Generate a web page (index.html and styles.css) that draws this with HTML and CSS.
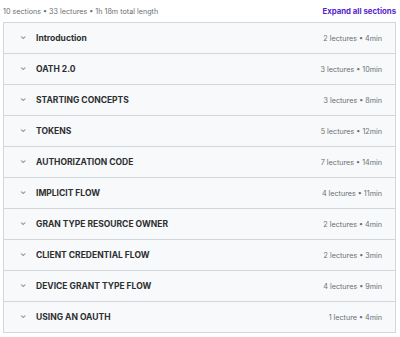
FILE: index.html
```html
<!DOCTYPE html>
<html lang="en">
<head>
  <meta charset="UTF-8" />
  <meta name="viewport" content="width=device-width, initial-scale=1.0"/>
  <title>Course content</title>
  <link rel="stylesheet" href="styles.css">
</head>
<body>
  <div class="content-head">
    <span class="summary">10 sections • 33 lectures • 1h 18m total length</span>
    <button class="expand">Expand all sections</button>
  </div>
  <div class="sections">
    <div class="section"><span class="chev">&#8964;</span><span class="title">Introduction</span><span class="meta">2 lectures • 4min</span></div>
    <div class="section"><span class="chev">&#8964;</span><span class="title">OATH 2.0</span><span class="meta">3 lectures • 10min</span></div>
    <div class="section"><span class="chev">&#8964;</span><span class="title">STARTING CONCEPTS</span><span class="meta">3 lectures • 8min</span></div>
    <div class="section"><span class="chev">&#8964;</span><span class="title">TOKENS</span><span class="meta">5 lectures • 12min</span></div>
    <div class="section"><span class="chev">&#8964;</span><span class="title">AUTHORIZATION CODE</span><span class="meta">7 lectures • 14min</span></div>
    <div class="section"><span class="chev">&#8964;</span><span class="title">IMPLICIT FLOW</span><span class="meta">4 lectures • 11min</span></div>
    <div class="section"><span class="chev">&#8964;</span><span class="title">GRAN TYPE RESOURCE OWNER</span><span class="meta">2 lectures • 4min</span></div>
    <div class="section"><span class="chev">&#8964;</span><span class="title">CLIENT CREDENTIAL FLOW</span><span class="meta">2 lectures • 3min</span></div>
    <div class="section"><span class="chev">&#8964;</span><span class="title">DEVICE GRANT TYPE FLOW</span><span class="meta">4 lectures • 9min</span></div>
    <div class="section"><span class="chev">&#8964;</span><span class="title">USING AN OAUTH</span><span class="meta">1 lecture • 4min</span></div>
  </div>
</body>
</html>
```

FILE: styles.css
```css
body {
  margin: 0;
  padding: 0 4px 0 3px;
  font-family: Inter, 'Liberation Sans', Arial, sans-serif;
  color: #2d2f31;
  background: #fff;
}
.content-head {
  display: flex;
  justify-content: space-between;
  align-items: center;
  height: 22px;
}
.summary {
  font-size: 7.2px;
  color: #6a6f73;
}
.expand {
  border: none;
  background: none;
  padding: 0;
  font-family: inherit;
  font-size: 7.8px;
  font-weight: 700;
  color: #5624d0;
  cursor: pointer;
}
.sections {
  border: 1px solid #d1d7dc;
}
.section {
  display: flex;
  align-items: center;
  height: 30px;
  padding: 0 13px 0 16px;
  background: #f7f9fa;
  border-bottom: 1px solid #d1d7dc;
}
.section:last-child {
  border-bottom: none;
}
.chev {
  width: 16px;
  font-size: 8px;
  color: #6a6f73;
  margin-top: -5px;
}
.title {
  flex: 1;
  font-size: 8.5px;
  font-weight: 700;
}
.meta {
  font-size: 7.2px;
  color: #6a6f73;
}
```
